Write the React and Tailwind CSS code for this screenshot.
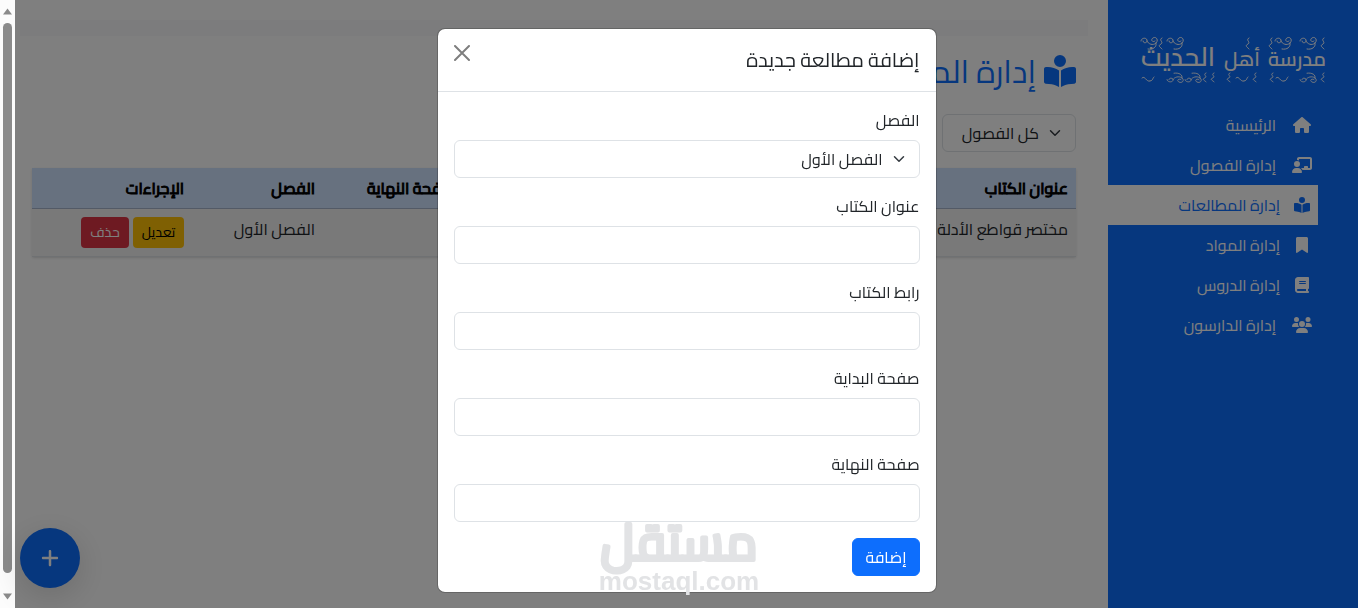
import React from "react";
import {
  FaHouse,
  FaChalkboardUser,
  FaBookOpenReader,
  FaBookmark,
  FaBook,
  FaUsers,
  FaPlus,
} from "react-icons/fa6";

// Wide glyphs keep a larger gap to their label than narrow ones.
const navItems = [
  { label: "الرئيسية", Icon: FaHouse, size: "h-4 w-[18px]", gap: "gap-4" },
  { label: "إدارة الفصول", Icon: FaChalkboardUser, size: "h-4 w-5", gap: "gap-4" },
  { label: "إدارة المطالعات", Icon: FaBookOpenReader, size: "h-4 w-4", gap: "gap-3", active: true },
  { label: "إدارة المواد", Icon: FaBookmark, size: "h-4 w-3", gap: "gap-3" },
  { label: "إدارة الدروس", Icon: FaBook, size: "h-4 w-3.5", gap: "gap-3" },
  { label: "إدارة الدارسون", Icon: FaUsers, size: "h-4 w-5", gap: "gap-4" },
];

const textFields = [
  { id: "title", label: "عنوان الكتاب" },
  { id: "link", label: "رابط الكتاب" },
  { id: "start", label: "صفحة البداية" },
  { id: "end", label: "صفحة النهاية" },
];

function SchoolLogo() {
  const curl = "M0 3c0-3 5-4 6-1s-4 4-4 1M6 3c1 3 6 5 9 2s0-7-3-5 0 5 2 3M15 5c1 4-3 7-8 6";
  const hook = "M3 0c-4 2 2 4-1 6s-2 2 1 5";
  const wave = "M0 3c3-3 4 4 8 3s2-3 4-4";
  return (
    <svg
      viewBox="0 0 188 46"
      className="h-[46px] w-[188px] overflow-visible text-white"
      role="img"
      aria-label="مدرسة أهل الحديث"
    >
      <g
        fill="currentColor"
        className="font-['Cairo','DejaVu_Sans',sans-serif] font-semibold"
        textAnchor="middle"
        direction="rtl"
      >
        <text x="158" y="30" fontSize="20">مدرسة</text>
        <text x="103" y="30" fontSize="20">أهل</text>
        <text x="39" y="30" fontSize="26">الحديث</text>
      </g>
      <g fill="none" stroke="currentColor" strokeWidth="1" strokeLinecap="round">
        <path transform="translate(2 2)" d={curl} />
        <path transform="translate(20 2)" d={hook} />
        <path transform="translate(28 2)" d={curl} />
        <path transform="translate(107 2)" d={hook} />
        <path transform="translate(130 2)" d={hook} />
        <path transform="translate(136 2)" d={curl} />
        <path transform="translate(161 2)" d={curl} />
        <path transform="translate(182 2)" d={hook} />
        <path transform="translate(3 39)" d={wave} />
        <path transform="translate(28 46) scale(1 -0.8)" d={curl} />
        <path transform="translate(46 46) scale(1 -0.8)" d={curl} />
        <path transform="translate(64 37) scale(1 0.8)" d={hook} />
        <path transform="translate(72 37) scale(1 0.8)" d={hook} />
        <path transform="translate(88 37) scale(1 0.8)" d={hook} />
        <path transform="translate(97 39)" d={wave} />
        <path transform="translate(114 37) scale(1 0.8)" d={hook} />
        <path transform="translate(131 37) scale(1 0.8)" d={hook} />
        <path transform="translate(137 39)" d={wave} />
        <path transform="translate(161 46) scale(1 -0.8)" d={curl} />
        <path transform="translate(182 37) scale(1 0.8)" d={hook} />
      </g>
    </svg>
  );
}

function Sidebar() {
  return (
    <aside className="w-[250px] shrink-0 bg-[#0d6efd] text-white">
      <div className="flex justify-center pt-9 pb-[23px]">
        <SchoolLogo />
      </div>
      <nav className="pr-10">
        {navItems.map(({ label, Icon, size, gap, active }) => (
          <a
            key={label}
            href="#"
            className={`flex h-10 items-center pr-1.5 ${gap} ${active ? "bg-white text-[#0d6efd]" : ""}`}
          >
            <span className="flex w-5 justify-center">
              <Icon className={size} />
            </span>
            <span>{label}</span>
          </a>
        ))}
      </nav>
    </aside>
  );
}

function SelectBox({ id, options, label }) {
  return (
    <div className="relative">
      <select
        id={id}
        aria-label={label}
        className="block h-[38px] w-full appearance-none rounded-md border border-[#dee2e6] bg-white pr-9 pl-3 text-[#212529]"
      >
        {options.map((option) => (
          <option key={option}>{option}</option>
        ))}
      </select>
      <svg
        viewBox="0 0 16 16"
        className="pointer-events-none absolute top-[13px] right-[15px] h-3 w-3"
        fill="none"
        stroke="#343a40"
        strokeWidth="2"
        strokeLinecap="round"
        strokeLinejoin="round"
      >
        <path d="m2 5 6 6 6-6" />
      </svg>
    </div>
  );
}

function ReadingsTable() {
  return (
    <table className="w-full table-fixed text-right shadow-sm">
      <colgroup>
        <col />
        <col className="w-[15%]" />
        <col className="w-[15%]" />
        <col className="w-[140px]" />
        <col className="w-[131px]" />
        <col className="w-[160px]" />
      </colgroup>
      <thead className="bg-[#cfe2ff] text-black [-webkit-text-stroke:1px_currentColor]">
        <tr className="h-10 border-b border-[#a6b5cc]">
          <th className="px-2 font-normal">عنوان الكتاب</th>
          <th className="px-2 font-normal">رابط الكتاب</th>
          <th className="px-2 font-normal">صفحة البداية</th>
          <th className="px-2 font-normal whitespace-nowrap">صفحة النهاية</th>
          <th className="px-2 font-normal">الفصل</th>
          <th className="px-2 font-normal">الإجراءات</th>
        </tr>
      </thead>
      <tbody>
        <tr className="border-b border-[#dee2e6] bg-[#f2f2f2]">
          <td className="p-2 align-top whitespace-nowrap">مختصر قواطع الأدلة</td>
          <td />
          <td />
          <td />
          <td className="p-2 align-top whitespace-nowrap">الفصل الأول</td>
          <td className="p-2">
            <div className="flex gap-1 text-sm">
              <button type="button" className="h-[31px] w-[51px] rounded bg-[#ffc107] text-black">
                تعديل
              </button>
              <button type="button" className="h-[31px] w-12 rounded bg-[#dc3545] text-white">
                حذف
              </button>
            </div>
          </td>
        </tr>
      </tbody>
    </table>
  );
}

function ReadingDialog() {
  return (
    <div
      role="dialog"
      aria-modal="true"
      aria-labelledby="dialog-title"
      className="mt-7 w-full max-w-[500px] rounded-lg border border-black/20 bg-white bg-clip-padding"
    >
      <header className="flex items-start justify-between border-b border-[#dee2e6] p-4">
        <h5 id="dialog-title" className="text-xl leading-[30px]">
          إضافة مطالعة جديدة
        </h5>
        <button type="button" aria-label="إغلاق" className="opacity-50">
          <svg viewBox="0 0 16 16" className="h-4 w-4" stroke="#000" strokeWidth="2" strokeLinecap="round">
            <path d="M1 1l14 14M15 1L1 15" />
          </svg>
        </button>
      </header>
      <form className="p-4">
        <div className="mb-4">
          <label htmlFor="chapter" className="mb-2 block">
            الفصل
          </label>
          <SelectBox id="chapter" options={["الفصل الأول"]} />
        </div>
        {textFields.map(({ id, label }) => (
          <div key={id} className="mb-4">
            <label htmlFor={id} className="mb-2 block">
              {label}
            </label>
            <input id={id} type="text" className="block h-[38px] w-full rounded-md border border-[#dee2e6] px-3" />
          </div>
        ))}
        <button
          type="button"
          className="block h-[38px] rounded-md border border-[#0d6efd] bg-[#0d6efd] px-3 text-white"
        >
          إضافة
        </button>
      </form>
    </div>
  );
}

function ScrollTrack() {
  return (
    <div className="flex w-[15px] shrink-0 flex-col items-center bg-[#fcfcfc] py-2 text-[#8b8b8b]">
      <svg viewBox="0 0 9 7" className="h-[7px] w-[9px]" fill="currentColor">
        <path d="M4.500 0.500L9 6.500H0z" />
      </svg>
      <div className="my-2 mb-5 w-[9px] grow rounded-full bg-[#8b8b8b]" />
      <svg viewBox="0 0 9 7" className="h-[7px] w-[9px]" fill="currentColor">
        <path d="M4.500 6.500L0 0.500h9z" />
      </svg>
    </div>
  );
}

export default function App() {
  return (
    <div
      dir="rtl"
      className="flex h-screen overflow-hidden bg-white font-['Cairo','DejaVu_Sans',sans-serif] text-base leading-6 text-[#212529]"
    >
      <Sidebar />
      <main className="min-w-0 grow pt-5 pr-5 pl-[5px]">
        <div className="h-4 bg-[#f8f9fa]" />
        <div className="px-3 pt-4">
          <h2 className="flex h-[38px] items-center gap-2 text-[32px] whitespace-nowrap text-[#0d6efd]">
            <FaBookOpenReader className="h-8 w-8" />
            إدارة المطالعات
          </h2>
          <div className="mt-6 mb-4 w-[134px]">
            <SelectBox id="filter" label="تصفية حسب الفصل" options={["كل الفصول"]} />
          </div>
          <ReadingsTable />
        </div>
      </main>
      <ScrollTrack />

      <button
        type="button"
        aria-label="إضافة"
        className="fixed bottom-5 left-5 flex h-[60px] w-[60px] items-center justify-center rounded-full bg-[#0d6efd] text-white shadow-[0_8px_32px_rgba(0,0,0,0.15)]"
      >
        <FaPlus className="h-5 w-5" />
      </button>

      <div className="fixed inset-y-0 right-0 left-[15px] flex items-start justify-center bg-black/50">
        <ReadingDialog />
      </div>

      <div className="pointer-events-none fixed inset-x-0 bottom-3 flex justify-center">
        <svg
          viewBox="0 0 160 76"
          className="h-[76px] w-40 overflow-visible"
          fill="#e2e3e5"
          textAnchor="middle"
        >
          <text
            x="80"
            y="40"
            fontSize="50"
            direction="rtl"
            stroke="#e2e3e5"
            strokeWidth="4"
            strokeLinejoin="round"
            className="font-['Cairo','DejaVu_Sans',sans-serif]"
          >
            مستقل
          </text>
          <text x="80" y="70" fontSize="26" direction="ltr" className="font-['Liberation_Sans',sans-serif] font-bold">
            mostaql.com
          </text>
        </svg>
      </div>
    </div>
  );
}
